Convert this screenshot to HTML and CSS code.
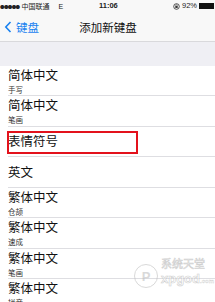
FILE: index.html
```html
<!DOCTYPE html>
<html>
<head>
<meta charset="utf-8">
<link rel="stylesheet" href="styles.css">
</head>
<body>
<div class="screen">
  <div class="status">
    <div class="st-left"><span class="dots">●●●●●</span> 中国联通 <span class="net">E</span></div>
    <div class="st-time">11:06</div>
    <div class="st-right">
      <svg class="lock" width="7" height="7" viewBox="0 0 10 10"><circle cx="5" cy="5" r="4" fill="none" stroke="#333" stroke-width="1.2"/><rect x="3.3" y="4.3" width="3.4" height="2.8" fill="#333"/><path d="M3.9 4.4V3.6a1.1 1.1 0 0 1 2.2 0v0.8" fill="none" stroke="#333" stroke-width="0.8"/></svg>
      <span class="pct">92%</span>
      <span class="battery"><span class="fill"></span></span>
    </div>
  </div>
  <div class="nav">
    <div class="back">
      <svg width="8" height="12" viewBox="0 0 8 12"><path d="M6.5 1L1.8 6l4.7 5" fill="none" stroke="#1a82f0" stroke-width="1.6"/></svg>
      <span>键盘</span>
    </div>
    <div class="title">添加新键盘</div>
  </div>
  <div class="section"></div>
  <ul class="list">
    <li class="row"><div class="name">简体中文</div><div class="sub">手写</div></li>
    <li class="row"><div class="name">简体中文</div><div class="sub">笔画</div></li>
    <li class="row single"><div class="name">表情符号</div><div class="highlight"></div></li>
    <li class="row single"><div class="name">英文</div></li>
    <li class="row"><div class="name">繁体中文</div><div class="sub">仓颉</div></li>
    <li class="row"><div class="name">繁体中文</div><div class="sub">速成</div></li>
    <li class="row"><div class="name">繁体中文</div><div class="sub">笔画</div></li>
    <li class="row"><div class="name">繁体中文</div><div class="sub">拼音</div></li>
  </ul>
  <div class="watermark">
    <span class="wm-logo">P</span>
    <div class="wm-text"><div class="wm-cn">系统天堂</div><div class="wm-en">xpgod<small>.com</small></div></div>
  </div>
</div>
</body>
</html>
```
FILE: styles.css
```css
* { box-sizing: border-box; }
html, body { margin: 0; padding: 0; }
body { font-family: "Noto Sans CJK SC", "Liberation Sans", sans-serif; background: #fff; }
.screen { width: 215px; height: 302px; overflow: hidden; position: relative; background: #fff; }
.status { height: 12px; display: flex; align-items: center; justify-content: space-between; padding: 0 1px 0 0; background: #f8f8f8; font-size: 7px; color: #222; line-height: 1; position: relative; }
.st-left { display: flex; align-items: center; gap: 2px; white-space: nowrap; }
.dots { font-size: 4.5px; letter-spacing: -0.6px; }
.net { margin-left: 7px; font-family: "Liberation Sans", sans-serif; }
.st-time { position: absolute; left: 99px; top: 2px; font-family: "Liberation Sans", sans-serif; font-weight: bold; font-size: 7.5px; }
.st-right { display: flex; align-items: center; gap: 2px; font-family: "Liberation Sans", sans-serif; }
.pct { font-size: 7.5px; }
.battery { width: 15px; height: 6px; border: 1px solid #111; display: inline-flex; padding: 0; }
.battery .fill { flex: 1; background: #111; }
.nav { height: 30px; background: #f8f8f8; border-bottom: 1px solid #d9d9dc; display: flex; align-items: center; position: relative; }
.back { display: flex; align-items: center; gap: 4px; padding-left: 4px; color: #1a82f0; font-size: 11.5px; }
.title { position: absolute; left: 0; right: 0; top: 0; bottom: 0; display: flex; align-items: center; justify-content: center; font-size: 11.5px; color: #111; padding-left: 1px; }
.section { height: 23.5px; background: #efeff4; }
.list { list-style: none; margin: 0; padding: 0 0 0 8px; }
.row { height: 30.5px; border-bottom: 1px solid #dedee2; display: flex; flex-direction: column; justify-content: center; position: relative; }
.name { font-size: 12.5px; color: #111; line-height: 18px; }
.sub { font-size: 7.5px; color: #333; line-height: 11px; }
.highlight { position: absolute; left: -1px; top: 4px; width: 131px; height: 23px; border: 2px solid #e3121c; }
.watermark { position: absolute; left: 134px; top: 255px; display: flex; align-items: center; gap: 3px; opacity: 0.55; color: #fff; }
.wm-logo { width: 24px; height: 24px; border-radius: 50%; border: 1.5px solid #bbb; color: #bbb; font: bold 13px "Liberation Sans", sans-serif; display: flex; align-items: center; justify-content: center; margin-top: 8px; }
.wm-text { display: flex; flex-direction: column; }
.wm-cn { font-size: 11px; line-height: 16px; color: #fff; -webkit-text-stroke: 0.6px #aaa; }
.wm-en { font: bold 13px/15px "Liberation Sans", sans-serif; color: #fff; -webkit-text-stroke: 0.6px #aaa; }
.wm-en small { font-size: 6px; -webkit-text-stroke: 0.3px #aaa; }
```
